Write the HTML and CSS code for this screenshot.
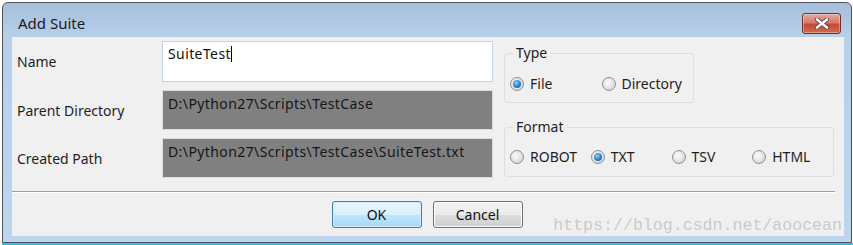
FILE: index.html
```html
<!DOCTYPE html>
<html lang="en">
<head>
  <meta charset="UTF-8">
  <title>Add Suite</title>
  <link rel="stylesheet" href="styles.css">
</head>
<body>
  <div class="window">
    <div class="titlebar">
      <span class="title">Add Suite</span>
      <button class="close" title="Close">
        <svg width="16" height="11" viewBox="0 0 16 11">
          <path d="M3 1.5 L13 9.5 M13 1.5 L3 9.5" stroke="#5a3a36" stroke-width="4.2" stroke-linecap="round"/>
          <path d="M3 1.5 L13 9.5 M13 1.5 L3 9.5" stroke="#fff" stroke-width="2.6" stroke-linecap="round"/>
        </svg>
      </button>
    </div>
    <div class="content">
      <div class="main">
        <div class="form">
          <label class="label">Name</label>
          <div class="field input">SuiteTest<span class="caret"></span></div>
          <label class="label">Parent Directory</label>
          <div class="field readonly">D:\Python27\Scripts\TestCase</div>
          <label class="label">Created Path</label>
          <div class="field readonly">D:\Python27\Scripts\TestCase\SuiteTest.txt</div>
        </div>
        <div class="options">
          <fieldset class="group type">
            <legend>Type</legend>
            <div class="radios">
              <span class="radio checked"><i></i>File</span>
              <span class="radio"><i></i>Directory</span>
            </div>
          </fieldset>
          <fieldset class="group format">
            <legend>Format</legend>
            <div class="radios">
              <span class="radio"><i></i>ROBOT</span>
              <span class="radio checked"><i></i>TXT</span>
              <span class="radio"><i></i>TSV</span>
              <span class="radio"><i></i>HTML</span>
            </div>
          </fieldset>
        </div>
      </div>
      <div class="separator"></div>
      <div class="buttons">
        <button class="btn default">OK</button>
        <button class="btn">Cancel</button>
      </div>
    </div>
  </div>
  <div class="edge"></div>
  <div class="watermark">https://blog.csdn.net/aoocean</div>
</body>
</html>
```

FILE: styles.css
```css
body {
  margin: 0;
  background: #fff;
  font-family: "Noto Sans", Arial, sans-serif;
  font-size: 14px;
  color: #1e1e1e;
  position: relative;
  height: 245px;
  overflow: hidden;
}
.window {
  width: 850px;
  box-sizing: border-box;
  margin: 2px 0 0 2px;
  border: 1px solid #4e545c;
  border-radius: 6px 6px 0 0;
  padding: 0 7px 6px 9px;
  background: linear-gradient(#a7bfdb 0, #b8cfea 34px, #bfd5ee 100%);
}
.titlebar {
  height: 34px;
  display: flex;
  align-items: center;
  justify-content: space-between;
  padding-top: 6px;
  box-sizing: border-box;
}
.title {
  padding-left: 6px;
  font-size: 15px;
  color: #1a1a1a;
}
.close {
  width: 39px;
  height: 21px;
  margin-right: 3px;
  padding: 0;
  border: 1px solid #6e3028;
  border-radius: 3px;
  background: linear-gradient(#e3a99f 0, #d77a6a 45%, #c64a37 55%, #cf6a4f 100%);
  box-shadow: inset 0 0 0 1px rgba(255, 255, 255, 0.35);
  display: flex;
  align-items: center;
  justify-content: center;
}
.content {
  height: 199px;
  background: #f0f0f0;
  padding: 4px 9px 0 5px;
  box-sizing: border-box;
}
.main {
  display: flex;
  gap: 11px;
}
.form {
  display: grid;
  grid-template-columns: 145px 331px;
  grid-template-rows: 41px 40px 40px;
  row-gap: 8px;
  align-items: center;
}
.label {
  color: #1e1e1e;
}
.field {
  height: 100%;
  box-sizing: border-box;
  padding: 4px 5px;
  line-height: 16px;
  letter-spacing: 0.4px;
}
.input {
  background: #fff;
  border: 1px solid #c3d3e4;
  padding-top: 4px;
  color: #111;
}
.caret {
  display: inline-block;
  width: 1px;
  height: 16px;
  background: #000;
  vertical-align: top;
}
.readonly {
  background: #808080;
  border: 1px solid #dcdcdc;
  padding-top: 5px;
  color: #161616;
}
.options {
  margin-top: 4px;
  display: flex;
  flex-direction: column;
  gap: 16px;
}
.group {
  margin: 0;
  border: 1px solid #d9dfe4;
  border-radius: 3px;
  padding: 0 0 0 5px;
  min-width: 0;
  box-sizing: border-box;
}
.group legend {
  margin-left: 3px;
  padding: 0 3px;
  line-height: 16px;
}
.type {
  width: 190px;
  padding-top: 15px;
  padding-bottom: 10px;
}
.format {
  width: 330px;
  padding-top: 14px;
  padding-bottom: 11px;
}
.radios {
  display: grid;
  grid-template-columns: repeat(2, 1fr);
  line-height: 16px;
}
.format .radios {
  grid-template-columns: repeat(4, 1fr);
}
.radio {
  display: flex;
  align-items: center;
  gap: 6px;
}
.radio i {
  width: 12px;
  height: 12px;
  border: 1px solid #8f9192;
  border-radius: 50%;
  background: radial-gradient(circle at 40% 40%, #fbfbfb 0, #e4e4e4 50%, #c9c9c9 100%);
  position: relative;
  flex: none;
}
.radio.checked i::after {
  content: "";
  position: absolute;
  left: 2px;
  top: 2px;
  width: 8px;
  height: 8px;
  border-radius: 50%;
  background: radial-gradient(circle at 40% 35%, #8fd0f7 0, #2a7fc8 55%, #18518c 100%);
}
.separator {
  margin: 13px 0 0 -5px;
  border-top: 1px solid #a0a0a0;
  border-bottom: 1px solid #fff;
}
.buttons {
  margin-top: 8px;
  display: flex;
  justify-content: center;
  gap: 11px;
  padding-left: 2px;
}
.btn {
  width: 90px;
  height: 27px;
  font-family: "Noto Sans", Arial, sans-serif;
  font-size: 14px;
  color: #111;
  border: 1px solid #707070;
  border-radius: 3px;
  background: linear-gradient(#f2f2f2 0, #ebebeb 50%, #dddddd 50%, #cfcfcf 100%);
  box-shadow: inset 0 0 0 1px #fcfcfc;
  padding: 0;
}
.btn.default {
  border-color: #3c7fb1;
  background: linear-gradient(#eaf6fd 0, #d9f0fc 50%, #bee6fd 50%, #a7d9f5 100%);
  box-shadow: inset 0 0 0 1px #d6eefc;
}
.edge {
  height: 2px;
  margin-left: 2px;
  background: #2ec3dc;
}
.watermark {
  position: absolute;
  right: 11px;
  bottom: 9px;
  font-family: "Liberation Mono", "DejaVu Sans Mono", monospace;
  font-size: 16.6px;
  line-height: 20px;
  color: #cbcbcb;
}
```
